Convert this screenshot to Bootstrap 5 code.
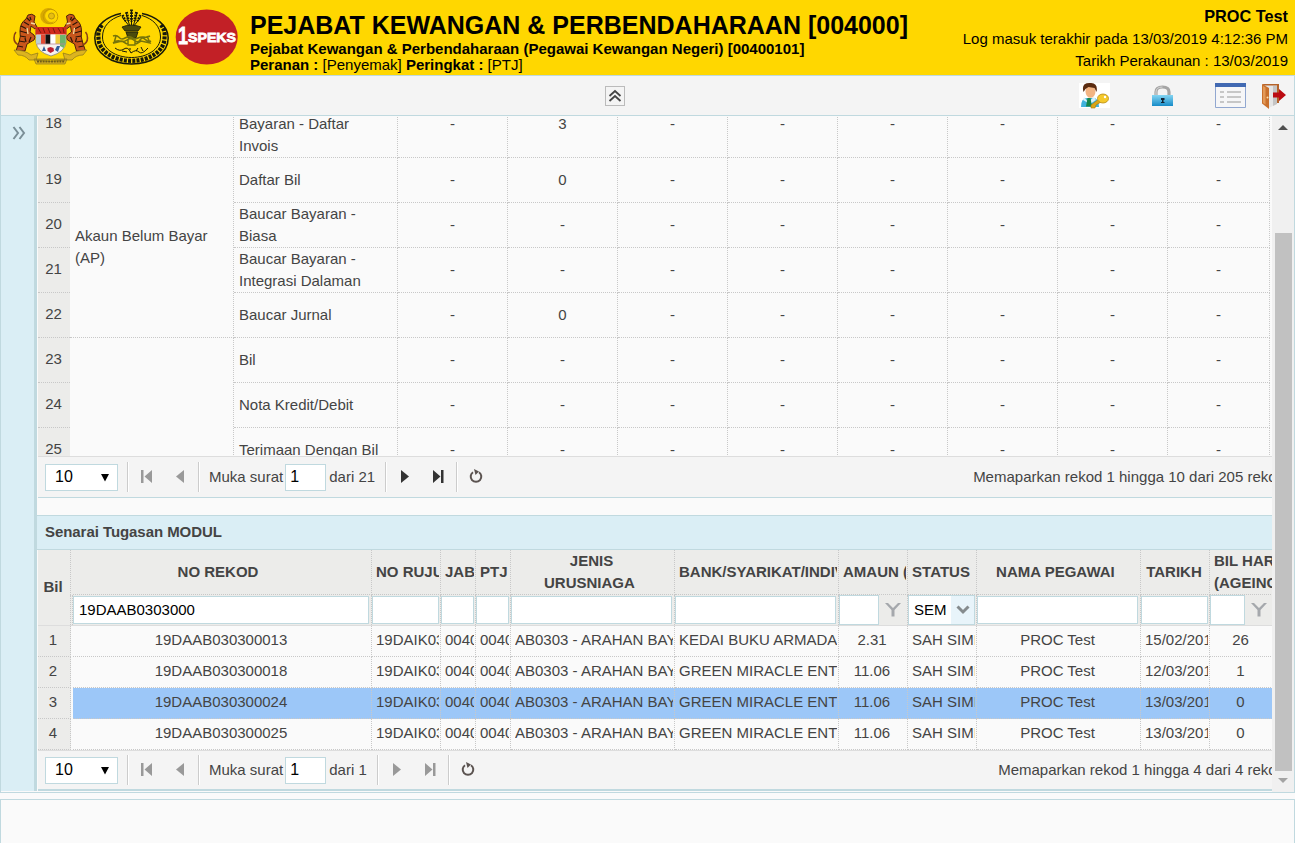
<!DOCTYPE html>
<html lang="ms">
<head>
<meta charset="utf-8">
<title>1SPEKS</title>
<meta name="viewport" content="width=device-width, initial-scale=1">
<link href="https://cdn.jsdelivr.net/npm/bootstrap@5.3.0/dist/css/bootstrap.min.css" rel="stylesheet">
<script src="https://cdn.jsdelivr.net/npm/bootstrap@5.3.0/dist/js/bootstrap.bundle.min.js" defer></script>
<style>
  :root { --line: #c0d9df; --dot: #c8c8c8; --pale: #daeef5; --cap: #ececea; }
  body { font: 15px/22px "Liberation Sans", Arial, sans-serif; color: #444; background: #fafafa; height: 843px; overflow: hidden; }
  .masthead { background: #ffd700; height: 75px; color: #000; }
  .logos { width: 250px; }
  .titles { padding-top: 9px; line-height: 16px; }
  .titles h1 { font-size: 25px; line-height: 32px; font-weight: 700; margin: 0; }
  .session { padding: 5px 7px 0 0; line-height: 22px; }
  .session .who { font-size: 16.300px; line-height: 23px; }
  .session .when { line-height: 21px; }
  .toolstrip { height: 41px; background: #f4f4f4; border: 1px solid var(--line); }
  .collapser { width: 20px; height: 20px; border: 1px solid #bbb; background: #f4f4f4; margin: 10px 0 0 604px; }
  .tools { padding: 7px 8px 0 0; }
  .workspace { height: 677px; border: 1px solid var(--line); border-top: 0; }
  .rail { width: 36px; background: var(--pale); border-right: 3px solid var(--line); height: 675px; padding: 10px 0 0 11px; }
  .stage { width: 1236px; overflow: hidden; }
  .upper { height: 340px; overflow: hidden; padding-left: 1px; }
  .status { border-collapse: separate; border-spacing: 0; table-layout: fixed; width: 1232px; margin-top: -26px; }
  .status td { height: 45px; padding: 0 5px; border: 0 dotted var(--dot); border-width: 0 1px 1px 0; vertical-align: middle; text-align: center; }
  .status td.no, .tasks .no { background: var(--cap); }
  .status td.no { border-right: 0; padding: 0 1px 2px 0; }
  .status td.txt { text-align: left; }
  .status td[rowspan] { padding-bottom: 2px; }
  .status tr:first-child td { height: 68px; }
  .pager { height: 42px; background: #f4f4f4; border-top: 1px solid #ddd; border-bottom: 1px solid var(--line); padding-left: 7px; margin-left: 1px; white-space: nowrap; }
  .pager > * { flex: none; }
  .pager > svg { position: relative; top: -1px; }
  .sizer { width: 73px; height: 27px; border: 1px solid var(--line); background: #fff; color: #000; font-size: 16px; padding: 0 8px 0 9px; }
  .sizer svg { margin-top: 2px; }
  .sep { width: 2px; height: 30px; border-left: 1px solid #ccc; border-right: 1px solid #fff; }
  .pageno { width: 41px; height: 27px; border: 1px solid var(--line); background: #fff; color: #000; padding: 0 4px; font-size: 16px; line-height: 24px; }
  .count { margin-right: -12px; }
  .caption-bar { height: 35px; background: var(--pale); border: 1px solid var(--line); border-width: 1px 0; padding: 5px 0 0 8px; font-weight: 700; letter-spacing: -.06px; margin-top: 17px; }
  .tasks { padding-left: 1px; }
  .line { display: grid; grid-template-columns: 33px 2px 299px 69px 35px 35px 164px 164px 69px 69px 164px 69px 63px; }
  .line > div { border-right: 1px dotted var(--dot); border-bottom: 1px dotted var(--dot); overflow: hidden; white-space: nowrap; height: 31px; padding: 3px 0 0 4px; }
  .line > div:nth-child(2) { border-right: 0; border-bottom-color: transparent; padding: 0; }
  .line > div:last-child { border-right: 0; }
  .line > div.mid { text-align: center; padding: 3px 2px 0 0; }
  .line > div > span { display: block; overflow: hidden; margin-right: 1px; }
  .heads > div, .heads > div.mid { height: 45px; background: var(--cap); font-weight: 700; padding-top: 11px; }
  .heads > div:nth-child(3) { padding-right: 8px; }
  .heads > div.two { padding-top: 0; line-height: 22px; }
  .heads > div.no { border-bottom: 0; padding-top: 26px; }
  .sieve { border-bottom: 1px solid #ddd; }
  .sieve > div { height: 30px; background: var(--cap); border-bottom: 0; padding: 1px 1px 0 0; }
  .sieve > div:nth-child(n+3) { padding-right: 1px; }
  .sieve > div.full { padding: 0; }
  .sieve > div:nth-child(2) { border-right: 1px dotted var(--dot); }
  .cellbox { height: 28px; border: 1px solid var(--line); background: #fff; color: #000; padding: 2px 5px 0 5px; }
  .sieve > div:nth-child(7) .cellbox, .sieve > div:nth-child(8) .cellbox, .sieve > div:nth-child(11) .cellbox { margin-right: 1px; }
  .full .cellbox { height: 30px; padding: 3px 0 0 5px; }
  .chosen > div:nth-child(n+3) { background: #9cc7f8; }
  .scroller { width: 22px; background: #f0f0f0; margin-left: -1px; position: relative; }
  .grip { width: 17px; height: 538px; background: #c1c1c1; margin: 0 0 0 3px; }
  .foot { margin-top: 6px; height: 60px; border: 1px solid var(--line); }
  svg { display: block; }
</style>
</head>
<body class="d-flex flex-column">
<header class="masthead d-flex flex-shrink-0">
  <div class="logos">
    <svg width="250" height="75" viewBox="0 0 250 75">
      <!-- national crest -->
      <g>
        <path d="M54 10.500a6 6 0 1 0 1 10 8 8 0 1 1-1-10z" fill="#d9a900"/>
        <circle cx="50.500" cy="16.500" r="7.300" fill="none" stroke="#c79b00" stroke-width="1"/>
        <circle cx="51.500" cy="16" r="3" fill="#e8be10" stroke="#a98a10" stroke-width=".8"/>
        <g id="tiger">
          <path d="M35 16q-3-3-7-1l-2 4q-6 4-6 12 1 6-1 11l-3 9h9l2-7 7-4q2-3 0-5l-4-3 1-6 4 3 2-2-3-5z" fill="#c9561c" stroke="#4f210c" stroke-width="1"/>
          <path d="M27 18l3 3M24 22l5 3M21 26l6 3M20 31l7 2M20 36l6 1M19 41l6 1M18 46l5 1M30 17l1 3M31 37l-2 5M25 38l1 4" stroke="#2c1508" stroke-width="1.200"/>
          <path d="M19 45q-5-2-5-7 0-4 2-6" fill="none" stroke="#8a3f16" stroke-width="1.600"/>
          <path d="M31 23l4 1M27 28l1 6" stroke="#f3d9a0" stroke-width="1.300"/>
        </g>
        <use href="#tiger" transform="translate(101.500 0) scale(-1 1)"/>
        <path d="M36 28h30v14q-1 10-15 14-14-4-15-14z" fill="#f6f2ef" stroke="#776" stroke-width=".7"/>
        <path d="M35.500 27h31v7.500h-31z" fill="#d02a1c"/>
        <path d="M38 28l3 5M43 28l2 5M48 28l2 5M53 28l2 5M58 28l3 5M63 28l1 5" stroke="#6f150c" stroke-width=".9"/>
        <path d="M36.300 35h5v9h-5z" fill="#b8cfd8"/><path d="M41 34.500h4.500V44H41z" fill="#e04a33"/><path d="M45.500 34.500h5V44h-5z" fill="#111"/><path d="M50.500 34.500h5V44h-5z" fill="#fff"/><path d="M55.500 34.500H60V44h-4.500z" fill="#f0d040"/><path d="M60 35h5.700v8l-2 5-3.700-2z" fill="#6fb56a"/>
        <path d="M37 44h28" stroke="#b89" stroke-width=".8"/>
        <path d="M42 51l2-5 2 5zM55 50l2-4 3 0-2 6z" fill="#315f9d"/><path d="M47.500 48l3-1 3 1 .5 3-3.500 2-3-2z" fill="#bd2032"/>
        <path d="M14 50q11 0 17 5l7-2-2 7q14 3 29 0l-2-7 7 2q6-5 17-5l-4 5q-7 0-11 5H29q-4-5-11-5zM34 59h33l-2 5H36z" fill="#dcb420" stroke="#8b751d" stroke-width=".7"/>
        <path d="M37 61.500h28" stroke="#705d17" stroke-width="1.800" stroke-dasharray="2 .8"/>
      </g>
      <!-- state seal -->
      <g fill="none" stroke="#17190a">
        <path d="M121 13.500C108 16 94.800 25 94.800 38c0 15 16 26 36.700 26s36.700-11 36.700-26c0-13-13.200-22-26.200-24.500" stroke-width="1.500"/>
        <path d="M121 15.500C110 19 102.500 26 102.500 37c0 12 13 20.500 29 20.500s29-8.500 29-20.500c0-11-7.500-18-18.500-21.500" stroke-width="1"/>
        <path d="M102 25C98 30 98 34 98.500 38c0 13 15 22.800 33 22.800s33-9.800 33-22.800c.5-4 .5-8-3.500-13" stroke-width="4.200" stroke-dasharray="3 1.200"/>
        <path d="M131.500 11v16M126 13l4 14M137 13l-4 14M122 17l8 10M141 17l-8 10" stroke-width="1"/>
        <path d="M131.500 9.500v12M126.500 12l2 9M136.500 12l-2 9" stroke-width="2.800" stroke-dasharray="1.800 1"/>
        <path d="M122.500 15l3 6M140.500 15l-3 6" stroke-width="2.600" stroke-dasharray="1.800 1"/>
        <path d="M122 27q9-4 19 0l-3 4h-13zM126 32h12l-2 6h-8z" fill="#4c4b0c" stroke-width=".8"/>
        <path d="M113 36c7-3 5 6 12 2s8 3 13 0 6 1 12-2M113 43c7-6 8 2 14-3s9 6 13 0 6 4 11 1M116 36l-2 7 8-2 5 3M147 36l3 7-9-2-5 3M128 39v6h7v-6" stroke-width="1.500" stroke="#77740a"/>
        <path d="M115 48q5 4 9 1t7 4q5-4 8-1t9-4M122 51l5 1M130 48v2M138 48l-2 3M141 47l2 4" stroke-width="1"/>
      </g>
      <ellipse cx="206.700" cy="37" rx="31" ry="27.500" fill="#c22026"/>
      <text x="178" y="44" fill="#fff" stroke="#fff" stroke-width=".8" font-family="Liberation Sans, sans-serif" font-weight="700" font-size="24" textLength="10" lengthAdjust="spacingAndGlyphs">1</text>
      <text x="188" y="42" fill="#fff" stroke="#fff" stroke-width=".8" font-family="Liberation Sans, sans-serif" font-weight="700" font-size="13.500" textLength="48" lengthAdjust="spacingAndGlyphs">SPEKS</text>
    </svg>
  </div>
  <div class="titles flex-grow-1">
    <h1>PEJABAT KEWANGAN &amp; PERBENDAHARAAN [004000]</h1>
    <div class="fw-bold">Pejabat Kewangan &amp; Perbendaharaan (Pegawai Kewangan Negeri) [00400101]</div>
    <div><b>Peranan :</b> [Penyemak] <b>Peringkat :</b> [PTJ]</div>
  </div>
  <div class="session text-end">
    <div class="who fw-bold">PROC Test</div>
    <div>Log masuk terakhir pada 13/03/2019 4:12:36 PM</div>
    <div class="when">Tarikh Perakaunan : 13/03/2019</div>
  </div>
</header>

<div class="toolstrip d-flex justify-content-between flex-shrink-0">
  <div class="collapser"><svg width="18" height="18" fill="none" stroke="#444" stroke-width="1.800"><path d="M3.500 9L9 4l5.500 5M3.500 14L9 9l5.500 5"/></svg></div>
  <div class="tools d-flex">
    <svg width="31" height="26" viewBox="0 0 31 26"><path fill="#fff" d="M0 0h31v25H0z"/><path d="M2 24q0-9 6-9h6q6 0 6 9z" fill="#3fb2dc"/><path d="M5 14l4 5 6-5 2 3-6 4-7-4z" fill="#d8f2fb"/><path d="M8.500 15h3l1.500 8.500H7z" fill="#16864a"/><ellipse cx="11.500" cy="8.500" rx="5" ry="6.300" fill="#f2b483"/><path d="M4.500 9Q2 0 10.500 0q9-.5 7 9l-2-4-6-1-3 2z" fill="#5b2b10"/><path d="M20 16l-8 6v3h4l1-3 5-3z" fill="#dba514" stroke="#a9780c" stroke-width=".6"/><ellipse cx="24" cy="15.500" rx="5.500" ry="4.500" fill="#f5c92c" stroke="#b78b12" stroke-width=".8"/><circle cx="26" cy="14" r="1.200" fill="#fff"/></svg>
    <svg style="margin-left:42px" width="21" height="26" viewBox="0 0 21 26"><defs><linearGradient id="lk" x2="0" y2="1"><stop stop-color="#84d5f2"/><stop offset="1" stop-color="#168bc8"/></linearGradient></defs><path d="M4 13V9q0-5 6.500-5T17 9v4" fill="none" stroke="#a5a5a5" stroke-width="3.200"/><path d="M4 12V9q0-5 6.500-5" fill="none" stroke="#d8d8d8" stroke-width="1"/><path d="M0 12h21v11H0z" fill="url(#lk)"/><path d="M9 15h3.500v2h-1v2h1v1H9v-1h1v-2H9z" fill="#123"/></svg>
    <svg style="margin-left:42px" width="31" height="26" viewBox="0 0 31 26"><path d="M.5.500h30v24H.5z" fill="#f6f6f7" stroke="#91a7d0"/><path d="M0 0h31v4H0z" fill="#4169b2"/><path d="M5 9h4M5 14h4M5 19h4M12 9h14M12 14h14M12 19h14" stroke="#b8b8b8" stroke-width="1.600"/></svg>
    <svg style="margin-left:16px" width="24" height="27" viewBox="0 0 24 27"><path d="M0 1h17v19h-2V3H3z" fill="#b5632a"/><path d="M3 2.500h12v18l-8 4.500z" fill="#e6e6e6"/><path d="M11 3h4v18l-4 2z" fill="#c4c4c4"/><path d="M0 1l7 4v21l-7-5.500z" fill="#c9702c"/><path d="M1 3l2.500 1.500v17L1 20z" fill="#e39a58"/><circle cx="5.500" cy="14.500" r="1" fill="#ffe2a8"/><path d="M11 9.500h6V6l7 6-7 6v-3.500h-6z" fill="#bb0b12"/></svg>
  </div>
</div>

<main class="workspace d-flex flex-shrink-0">
  <nav class="rail flex-shrink-0"><svg width="14" height="14" fill="none" stroke="#7b8f97" stroke-width="2"><path d="M1.500 1l4.500 6-4.500 6M7.500 1l4.500 6-4.500 6"/></svg></nav>
  <section class="stage flex-shrink-0">
    <div class="upper">
      <table class="status">
        <colgroup><col style="width:32px"><col style="width:164px"><col style="width:164px"><col style="width:110px"><col style="width:110px"><col style="width:110px"><col style="width:110px"><col style="width:110px"><col style="width:110px"><col style="width:110px"><col style="width:102px"></colgroup>
        <tr><td class="no">18</td><td></td><td class="txt">Baucar<br>Bayaran - Daftar<br>Invois</td><td>-</td><td>3</td><td>-</td><td>-</td><td>-</td><td>-</td><td>-</td><td>-</td></tr>
        <tr><td class="no">19</td><td class="txt" rowspan="4">Akaun Belum Bayar (AP)</td><td class="txt">Daftar Bil</td><td>-</td><td>0</td><td>-</td><td>-</td><td>-</td><td>-</td><td>-</td><td>-</td></tr>
        <tr><td class="no">20</td><td class="txt">Baucar Bayaran - Biasa</td><td>-</td><td>-</td><td>-</td><td>-</td><td>-</td><td>-</td><td>-</td><td>-</td></tr>
        <tr><td class="no">21</td><td class="txt">Baucar Bayaran - Integrasi Dalaman</td><td>-</td><td>-</td><td>-</td><td>-</td><td>-</td><td></td><td>-</td><td>-</td></tr>
        <tr><td class="no">22</td><td class="txt">Baucar Jurnal</td><td>-</td><td>0</td><td>-</td><td>-</td><td>-</td><td>-</td><td>-</td><td>-</td></tr>
        <tr><td class="no">23</td><td rowspan="3"></td><td class="txt">Bil</td><td>-</td><td>-</td><td>-</td><td>-</td><td>-</td><td>-</td><td>-</td><td>-</td></tr>
        <tr><td class="no">24</td><td class="txt">Nota Kredit/Debit</td><td>-</td><td>-</td><td>-</td><td>-</td><td>-</td><td>-</td><td>-</td><td>-</td></tr>
        <tr><td class="no">25</td><td class="txt">Terimaan Dengan Bil</td><td>-</td><td>-</td><td>-</td><td>-</td><td>-</td><td>-</td><td>-</td><td>-</td></tr>
      </table>
    </div>
    <div class="pager d-flex align-items-center">
      <div class="sizer d-flex align-items-center justify-content-between"><span>10</span><svg width="8" height="8"><path d="M0 0h8L4 7.500z"/></svg></div>
      <div class="sep" style="margin-left:9px"></div>
      <svg style="margin-left:12px" width="12" height="13" fill="#999"><path d="M0 0h2.500v13H0zM11 0v13L3.500 6.500z"/></svg>
      <svg style="margin-left:23px" width="9" height="13" fill="#999"><path d="M8 0v13L0 6.500z"/></svg>
      <div class="sep" style="margin-left:13px"></div>
      <span style="margin-left:9px">Muka surat</span><div class="pageno" style="margin-left:2px">1</div><span style="margin-left:3px">dari 21</span>
      <div class="sep" style="margin-left:10px"></div>
      <svg style="margin-left:14px" width="9" height="13" fill="#333"><path d="M0 0v13l8-6.500z"/></svg>
      <svg style="margin-left:23px" width="12" height="13" fill="#333"><path d="M0 0v13l7.500-6.500zM8 0h2.500v13H8z"/></svg>
      <div class="sep" style="margin-left:11px"></div>
      <svg style="margin-left:11px" width="14" height="14" fill="none" stroke="#5b5350" stroke-width="2"><path d="M4 3.200a5.300 5.300 0 1 0 6 0"/><path d="M5 0l5 2.500L6.500 6z" fill="#5b5350" stroke="none"/></svg>
      <span class="count ms-auto">Memaparkan rekod 1 hingga 10 dari 205 rekod</span>
    </div>
    <div class="caption-bar">Senarai Tugasan MODUL</div>
    <div class="tasks">
      <div class="line heads"><div class="no mid">Bil</div><div></div><div class="mid">NO REKOD</div><div><span>NO RUJUKAN</span></div><div><span>JABATAN</span></div><div><span>PTJ</span></div><div class="mid two">JENIS<br>URUSNIAGA&nbsp;</div><div><span>BANK/SYARIKAT/INDIVIDU</span></div><div><span>AMAUN (RM)</span></div><div class="mid">STATUS</div><div class="mid">NAMA PEGAWAI&nbsp;</div><div class="mid">TARIKH</div><div class="two">BIL HARI<br>(AGEING)</div></div>
      <div class="line sieve"><div class="no"></div><div></div><div><div class="cellbox" style="margin-right:1px">19DAAB0303000</div></div><div><div class="cellbox"></div></div><div><div class="cellbox"></div></div><div><div class="cellbox"></div></div><div><div class="cellbox"></div></div><div><div class="cellbox"></div></div>
        <div class="full d-flex align-items-center"><div class="cellbox" style="width:40px"></div><svg style="margin-left:6px" width="16" height="14" viewBox="0 0 16 14"><path d="M0 0h3l5 5 5-5h3L9.500 7v6.500h-3V7z" fill="#a5a8ac"/></svg></div>
        <div class="full"><div class="cellbox d-flex p-0 justify-content-between" style="margin-right:1px"><span style="padding:3px 0 0 5px">SEM</span><span class="d-flex align-items-center justify-content-center" style="width:23px;background:#e8f4fa"><svg width="14" height="10" fill="none" stroke="#858b8d" stroke-width="3"><path d="M1.500 1.500L7 7l5.500-5.500"/></svg></span></div></div>
        <div><div class="cellbox"></div></div><div><div class="cellbox"></div></div>
        <div class="full d-flex align-items-center"><div class="cellbox" style="width:35px"></div><svg style="margin-left:6px" width="16" height="14" viewBox="0 0 16 14"><path d="M0 0h3l5 5 5-5h3L9.500 7v6.500h-3V7z" fill="#a5a8ac"/></svg></div></div>
      <div class="line"><div class="no mid">1</div><div></div><div class="mid">19DAAB030300013</div><div><span>19DAIK0300</span></div><div><span>00400</span></div><div><span>00400</span></div><div><span>AB0303 - ARAHAN BAYARAN</span></div><div><span>KEDAI BUKU ARMADA</span></div><div class="mid">2.31</div><div><span>SAH SIMPAN</span></div><div class="mid">PROC Test</div><div><span>15/02/2019</span></div><div class="mid">26</div></div>
      <div class="line"><div class="no mid">2</div><div></div><div class="mid">19DAAB030300018</div><div><span>19DAIK0300</span></div><div><span>00400</span></div><div><span>00400</span></div><div><span>AB0303 - ARAHAN BAYARAN</span></div><div><span>GREEN MIRACLE ENTERPRISE</span></div><div class="mid">11.06</div><div><span>SAH SIMPAN</span></div><div class="mid">PROC Test</div><div><span>12/03/2019</span></div><div class="mid">1</div></div>
      <div class="line chosen"><div class="no mid">3</div><div></div><div class="mid">19DAAB030300024</div><div><span>19DAIK0300</span></div><div><span>00400</span></div><div><span>00400</span></div><div><span>AB0303 - ARAHAN BAYARAN</span></div><div><span>GREEN MIRACLE ENTERPRISE</span></div><div class="mid">11.06</div><div><span>SAH SIMPAN</span></div><div class="mid">PROC Test</div><div><span>13/03/2019</span></div><div class="mid">0</div></div>
      <div class="line"><div class="no mid">4</div><div></div><div class="mid">19DAAB030300025</div><div><span>19DAIK0300</span></div><div><span>00400</span></div><div><span>00400</span></div><div><span>AB0303 - ARAHAN BAYARAN</span></div><div><span>GREEN MIRACLE ENTERPRISE</span></div><div class="mid">11.06</div><div><span>SAH SIMPAN</span></div><div class="mid">PROC Test</div><div><span>13/03/2019</span></div><div class="mid">0</div></div>
    </div>
    <div class="pager d-flex align-items-center" style="height:41px;border-bottom-width:2px">
      <div class="sizer d-flex align-items-center justify-content-between"><span>10</span><svg width="8" height="8"><path d="M0 0h8L4 7.500z"/></svg></div>
      <div class="sep" style="margin-left:9px"></div>
      <svg style="margin-left:12px" width="12" height="13" fill="#999"><path d="M0 0h2.500v13H0zM11 0v13L3.500 6.500z"/></svg>
      <svg style="margin-left:23px" width="9" height="13" fill="#999"><path d="M8 0v13L0 6.500z"/></svg>
      <div class="sep" style="margin-left:13px"></div>
      <span style="margin-left:9px">Muka surat</span><div class="pageno" style="margin-left:2px">1</div><span style="margin-left:3px">dari 1</span>
      <div class="sep" style="margin-left:10px"></div>
      <svg style="margin-left:14px" width="9" height="13" fill="#999"><path d="M0 0v13l8-6.500z"/></svg>
      <svg style="margin-left:23px" width="12" height="13" fill="#999"><path d="M0 0v13l7.500-6.500zM8 0h2.500v13H8z"/></svg>
      <div class="sep" style="margin-left:11px"></div>
      <svg style="margin-left:11px" width="14" height="14" fill="none" stroke="#5b5350" stroke-width="2"><path d="M4 3.200a5.300 5.300 0 1 0 6 0"/><path d="M5 0l5 2.500L6.500 6z" fill="#5b5350" stroke="none"/></svg>
      <span class="count ms-auto">Memaparkan rekod 1 hingga 4 dari 4 rekod</span>
    </div>
  </section>
  <div class="scroller d-flex flex-column">
    <svg class="mb-auto" style="margin:7px 0 0 6px" width="10" height="8"><path d="M5 2l5 5H0z" fill="#505050"/></svg>
    <div class="grip"></div>
    <svg style="margin:6px 0 8px 6px" width="10" height="7"><path d="M0 1h10L5 6z" fill="#a3a3a3"/></svg>
  </div>
</main>
<footer class="foot flex-shrink-0"></footer>
</body>
</html>
